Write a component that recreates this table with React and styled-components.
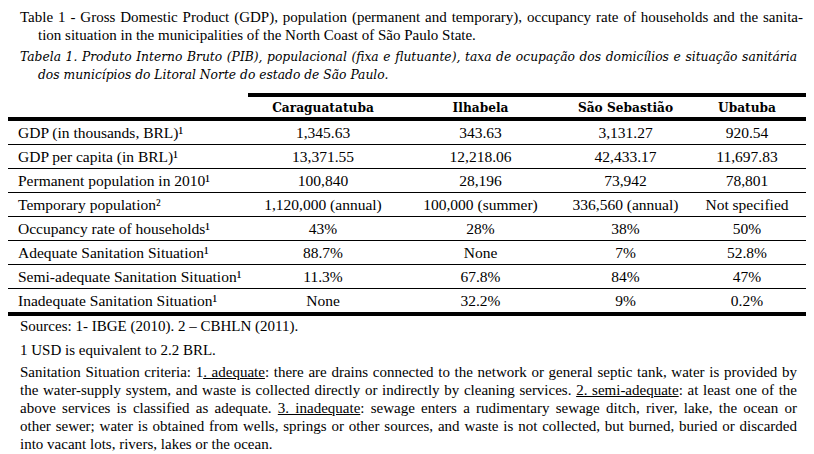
import React from "react";
import styled, { createGlobalStyle } from "styled-components";

const GlobalStyle = createGlobalStyle`
  html, body {
    margin: 0;
    padding: 0;
    background: #ffffff;
  }
  body {
    font-family: "Liberation Serif", "Times New Roman", serif;
    color: #000;
  }
`;

const Page = styled.div`
  width: 814px;
  padding-top: 8px;
  font-size: 15px;
  line-height: 18px;
`;

const Block = styled.div`
  margin: ${(p) => p.$margin || "0"};
  margin-left: 20px;
  width: ${(p) => p.$width || 783}px;
`;

const ItalicBlock = styled(Block)`
  font-family: "DejaVu Serif", serif;
  font-style: italic;
  font-size: 12.3px;
`;

const Line = styled.div`
  white-space: nowrap;
  text-align: ${(p) => (p.$end ? "left" : "justify")};
  text-align-last: ${(p) => (p.$end ? "left" : "justify")};
  padding-left: ${(p) => (p.$indent ? 18 : 0)}px;
`;

const Table = styled.table`
  margin: 0 0 0 8px;
  width: 798px;
  border-collapse: collapse;
  table-layout: fixed;
  font-size: 15.5px;
`;

const HeadCell = styled.th`
  font-family: "DejaVu Serif", serif;
  font-weight: bold;
  font-size: 12.2px;
  text-align: center;
  height: 18px;
  padding: 2px 0 0 0;
  border-top: ${(p) => (p.$blank ? "none" : "4px solid #000")};
  border-bottom: 4px solid #000;
`;

const Row = styled.tr`
  border-bottom: ${(p) => (p.$last ? "4px solid #000" : "1.4px solid #000")};
`;

const Cell = styled.td`
  height: 23px;
  padding: 0 0 0 ${(p) => (p.$label ? 10 : 0)}px;
  text-align: ${(p) => (p.$label ? "left" : "center")};
  white-space: nowrap;
`;

const Note = styled.div`
  margin: ${(p) => p.$margin};
  margin-left: 20px;
`;

const U = styled.span`
  text-decoration: underline;
`;

const columns = ["Caraguatatuba", "Ilhabela", "São Sebastião", "Ubatuba"];
const widths = [240, 150, 165, 125, 118];

const rows = [
  ["GDP (in thousands, BRL)¹", "1,345.63", "343.63", "3,131.27", "920.54"],
  ["GDP per capita (in BRL)¹", "13,371.55", "12,218.06", "42,433.17", "11,697.83"],
  ["Permanent population in 2010¹", "100,840", "28,196", "73,942", "78,801"],
  ["Temporary population²", "1,120,000 (annual)", "100,000 (summer)", "336,560 (annual)", "Not specified"],
  ["Occupancy rate of households¹", "43%", "28%", "38%", "50%"],
  ["Adequate Sanitation Situation¹", "88.7%", "None", "7%", "52.8%"],
  ["Semi-adequate Sanitation Situation¹", "11.3%", "67.8%", "84%", "47%"],
  ["Inadequate Sanitation Situation¹", "None", "32.2%", "9%", "0.2%"],
];

export default function App() {
  return (
    <Page>
      <GlobalStyle />
      <Block $margin="0 0 4px 0">
        <Line>
          Table 1 - Gross Domestic Product (GDP), population (permanent and temporary), occupancy rate of households and the sanita-
        </Line>
        <Line $end $indent>
          tion situation in the municipalities of the North Coast of São Paulo State.
        </Line>
      </Block>
      <ItalicBlock $width={777} $margin="0 0 9px 0">
        <Line>
          Tabela 1. Produto Interno Bruto (PIB), populacional (fixa e flutuante), taxa de ocupação dos domicílios e situação sanitária
        </Line>
        <Line $end $indent>
          dos municípios do Litoral Norte do estado de São Paulo.
        </Line>
      </ItalicBlock>
      <Table>
        <colgroup>
          {widths.map((w, i) => (
            <col key={i} style={{ width: w }} />
          ))}
        </colgroup>
        <thead>
          <tr>
            <HeadCell $blank />
            {columns.map((c) => (
              <HeadCell key={c}>{c}</HeadCell>
            ))}
          </tr>
        </thead>
        <tbody>
          {rows.map((r, i) => (
            <Row key={r[0]} $last={i === rows.length - 1}>
              {r.map((v, j) => (
                <Cell key={j} $label={j === 0}>
                  {v}
                </Cell>
              ))}
            </Row>
          ))}
        </tbody>
      </Table>
      <Note $margin="1px 0 6px 0">Sources: 1- IBGE (2010). 2 – CBHLN (2011).</Note>
      <Note $margin="0 0 4px 0">1 USD is equivalent to 2.2 BRL.</Note>
      <Block $width={777}>
        <Line>
          Sanitation Situation criteria: 1<U>. adequate</U>: there are drains connected to the network or general septic tank, water is provided by
        </Line>
        <Line>
          the water-supply system, and waste is collected directly or indirectly by cleaning services. <U>2. semi-adequate</U>: at least one of the
        </Line>
        <Line>
          above services is classified as adequate. <U>3. inadequate</U>: sewage enters a rudimentary sewage ditch, river, lake, the ocean or
        </Line>
        <Line>
          other sewer; water is obtained from wells, springs or other sources, and waste is not collected, but burned, buried or discarded
        </Line>
        <Line $end>into vacant lots, rivers, lakes or the ocean.</Line>
      </Block>
    </Page>
  );
}
